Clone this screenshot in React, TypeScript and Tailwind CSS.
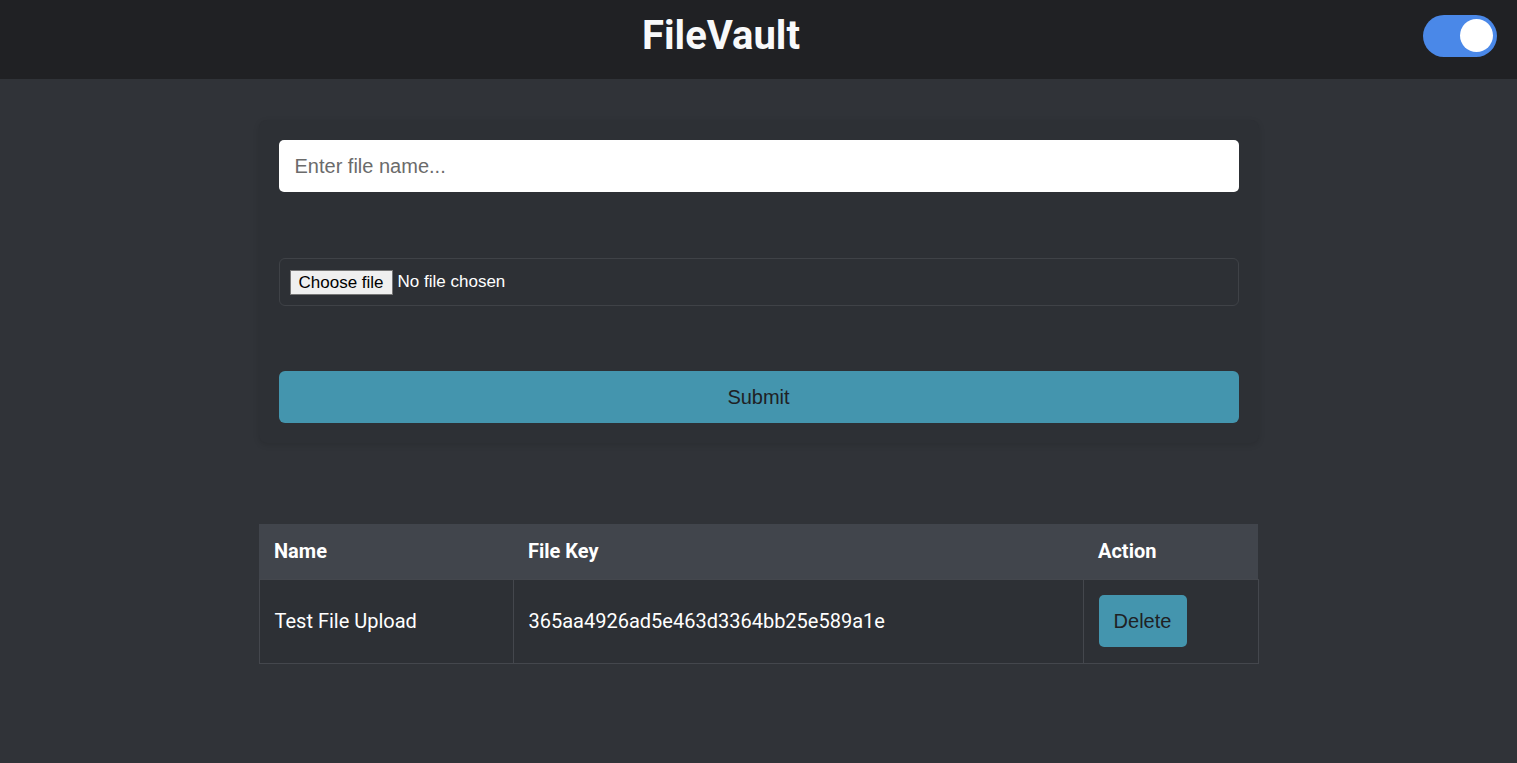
export default function App() {
  return (
    <div className="min-h-[763px] bg-[#303338] font-['Roboto',sans-serif] text-white">
      <header className="flex h-[79px] items-center bg-[#202124] pb-[8px]">
        <h1 className="w-[1442px] text-center text-[40px] font-bold text-[#f8f9fa]">FileVault</h1>
        <button className="ml-[-19px] flex h-[42px] w-[74px] items-center justify-end rounded-full bg-[#4a88e8] pr-[4px]">
          <span className="size-[33px] rounded-full bg-white" />
        </button>
      </header>

      <main className="mx-auto w-[1000px] pt-[41px]">
        <form
          className="flex flex-col rounded-lg bg-[#2d3035] px-[20px] pb-[20px] pt-[20px] shadow-[0_2px_6px_rgba(0,0,0,0.12)]"
          onSubmit={(e) => e.preventDefault()}
        >
          <input
            type="text"
            placeholder="Enter file name..."
            className="h-[52px] rounded-[5px] bg-white px-[16px] font-['Liberation_Sans',Arial,sans-serif] text-[20px] text-black placeholder:text-[#6b6b6b] outline-none"
          />
          <div className="mt-[66px] flex h-[48px] items-center rounded-[6px] border border-[#3f4247] px-[10px] font-['Liberation_Sans',Arial,sans-serif] text-[17px]">
            <span className="mr-[5px] border border-[#767676] bg-[#efefef] px-[8px] py-[1px] leading-[21px] text-black">Choose file</span>
            <span>No file chosen</span>
          </div>
          <button className="mt-[65px] h-[52px] rounded-[6px] bg-[#4495ae] font-['Liberation_Sans',Arial,sans-serif] text-[20px] text-[#1f2124]">
            Submit
          </button>
        </form>

        <table className="mt-[81px] w-full border-collapse text-[20px]">
          <thead>
            <tr className="h-[55px] bg-[#41454c] text-left">
              <th className="w-[254px] pl-[15px] font-bold">Name</th>
              <th className="w-[570px] pl-[15px] font-bold">File Key</th>
              <th className="pl-[15px] font-bold">Action</th>
            </tr>
          </thead>
          <tbody>
            <tr className="h-[84px] bg-[#2d3035]">
              <td className="border border-[#44474d] pl-[15px]">Test File Upload</td>
              <td className="border border-[#44474d] pl-[15px]">365aa4926ad5e463d3364bb25e589a1e</td>
              <td className="border border-[#44474d] pl-[15px]">
                <button className="h-[52px] w-[88px] rounded-[5px] bg-[#4495ae] font-['Liberation_Sans',Arial,sans-serif] text-[20px] text-[#1f2124]">
                  Delete
                </button>
              </td>
            </tr>
          </tbody>
        </table>
      </main>
    </div>
  );
}
